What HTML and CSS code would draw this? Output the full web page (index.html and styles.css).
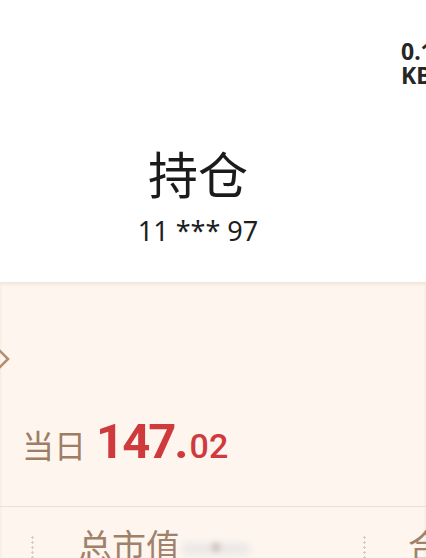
FILE: index.html
```html
<!DOCTYPE html>
<html lang="zh">
<head>
<meta charset="utf-8">
<link rel="stylesheet" href="styles.css">
</head>
<body>
<div class="page">
  <header class="header">
    <div class="net">
      <span>0.1</span>
      <span>KB</span>
    </div>
    <h1 class="title">持仓</h1>
    <div class="account">11 *** 97</div>
  </header>
  <main class="panel">
    <div class="chev-row">
      <svg class="chev" width="14" height="30" viewBox="0 0 14 30">
        <polyline points="-4,2 8,14 -4,26" fill="none" stroke="#b58e6f" stroke-width="2.6" stroke-linejoin="miter"/>
      </svg>
    </div>
    <div class="today">
      <span class="cut">：</span>
      <span class="today-label">当日</span>
      <span class="amount"><span class="int">147.</span><span class="dec">02</span></span>
    </div>
    <div class="divider"></div>
    <div class="cols">
      <div class="dots"></div>
      <div class="col-label">总市值</div>
      <div class="blur"><span class="blur-dot"></span></div>
      <div class="dots dots-2"></div>
      <div class="col-label col-2">合</div>
    </div>
  </main>
</div>
</body>
</html>
```

FILE: styles.css
```css
html, body {
  margin: 0;
  padding: 0;
  background: #fdf5ee;
}
.page {
  width: 426px;
  height: 558px;
  overflow: hidden;
  font-family: "Noto Sans CJK SC", "Noto Sans", sans-serif;
}
.header {
  height: 282px;
  background: #ffffff;
  display: flex;
  flex-direction: column;
  align-items: center;
  padding-right: 30px;
  box-sizing: border-box;
}
.net {
  align-self: flex-start;
  margin-left: 401px;
  margin-top: 39px;
  display: flex;
  flex-direction: column;
  font-family: "Noto Sans", sans-serif;
  font-weight: 700;
  font-size: 23px;
  line-height: 24px;
  color: #262626;
  white-space: nowrap;
  height: 48px;
}
.title {
  margin: 56px 0 0 0;
  font-size: 50px;
  font-weight: 400;
  line-height: 58px;
  color: #1b1b1b;
}
.account {
  margin-top: 14px;
  font-family: "Noto Sans", sans-serif;
  font-size: 27px;
  line-height: 32px;
  color: #1e1e1e;
}
.panel {
  background: #fdf5ee;
  box-shadow: inset 0 2px 3px rgba(200, 180, 160, 0.25);
  height: 276px;
}
.chev-row {
  padding-top: 63px;
  height: 30px;
}
.chev {
  display: block;
}
.today {
  margin-top: 38px;
  display: flex;
  align-items: baseline;
  height: 60px;
  white-space: nowrap;
}
.cut {
  margin-left: -14px;
  margin-right: 22px;
  font-size: 30px;
  color: #a08068;
  display: inline-block;
  width: 14px;
}
.today-label {
  font-size: 32px;
  color: #9d7d64;
  margin-right: 10px;
}
.amount {
  font-family: "Roboto", "Noto Sans", sans-serif;
  font-weight: 700;
  color: #cf3a3c;
}
.int {
  font-size: 49px;
  letter-spacing: -2px;
}
.dec {
  font-size: 34px;
  font-weight: 500;
  margin-left: 3px;
}
.divider {
  margin-top: 33px;
  height: 1px;
  background: #ece1d8;
}
.cols {
  display: flex;
  align-items: flex-start;
  padding-top: 18px;
  white-space: nowrap;
}
.dots {
  flex: none;
  width: 3px;
  height: 40px;
  margin-left: 31px;
  margin-top: 10px;
  background: radial-gradient(circle, #d6ccc4 1px, transparent 1.3px) 0 0 / 3px 5px repeat-y;
}
.col-label {
  flex: none;
  margin-left: 44px;
  font-size: 34px;
  line-height: 40px;
  color: #a0816a;
}
.blur {
  flex: none;
  width: 68px;
  height: 12px;
  margin-top: 18px;
  margin-left: 2px;
  border-radius: 6px;
  background: #ebe8e6;
  filter: blur(3px);
  display: flex;
  justify-content: center;
}
.blur-dot {
  width: 6px;
  height: 8px;
  border-radius: 3px;
  background: #b8aaa0;
}
.dots-2 {
  margin-left: 113px;
}
.col-2 {
  margin-left: 42px;
}
```
